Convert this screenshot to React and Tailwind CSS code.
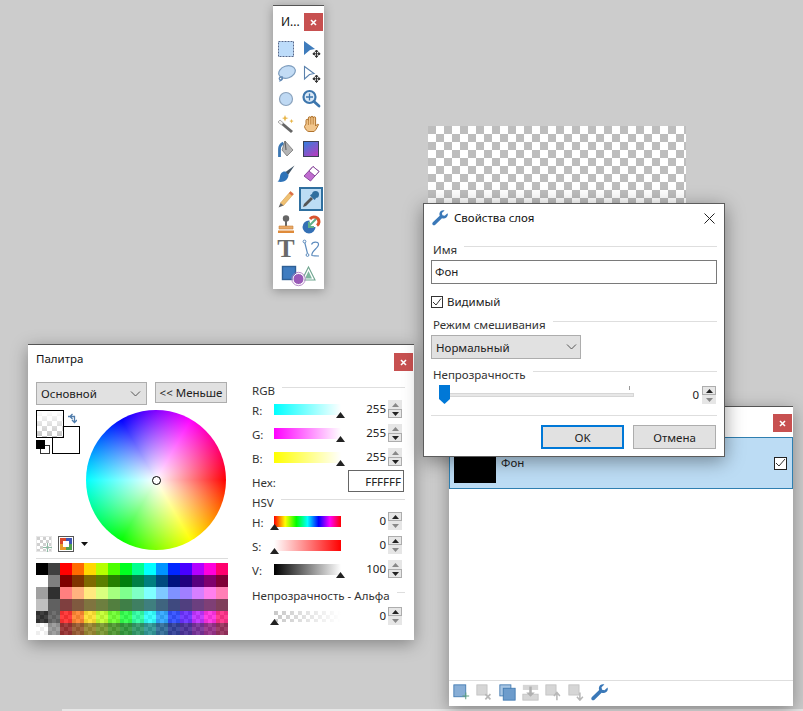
import React from 'react';

const font = { fontFamily: '"Noto Sans", "Open Sans", sans-serif' };

const CHECK = 'bg-[conic-gradient(#fff_25%,#bdbdbd_0_50%,#fff_0_75%,#bdbdbd_0)]';

const row1 = ['#000000', '#404040', '#ff0000', '#ff6a00', '#ffd800', '#b6ff00', '#4cff00', '#00ff21', '#00ff90', '#00ffff', '#0094ff', '#0026ff', '#4800ff', '#b200ff', '#ff00dc', '#ff006e'];
const row2 = ['#ffffff', '#808080', '#7f0000', '#7f3300', '#7f6a00', '#5b7f00', '#267f00', '#007f0e', '#007f46', '#007f7f', '#004a7f', '#00137f', '#21007f', '#57007f', '#7f006e', '#7f0037'];
const row3 = ['#a0a0a0', '#303030', '#ff7f7f', '#ffb27f', '#ffe97f', '#daff7f', '#a5ff7f', '#7fff8e', '#7fffc5', '#7fffff', '#7fc9ff', '#7f92ff', '#a17fff', '#d67fff', '#ff7fed', '#ff7fb6'];
const row4 = ['#c0c0c0', '#606060', '#7f3f3f', '#7f593f', '#7f743f', '#6d7f3f', '#527f3f', '#3f7f47', '#3f7f62', '#3f7f7f', '#3f647f', '#3f497f', '#503f7f', '#6b3f7f', '#7f3f76', '#7f3f5b'];

const CloseBtn = ({ className }) => (
  <div className={`absolute flex items-center justify-center w-[19px] h-[18px] bg-[#c75050] ${className}`}>
    <svg width="7" height="7" viewBox="0 0 7 7"><path d="M1 1l5 5M6 1l-5 5" stroke="#fff" strokeWidth="1.6" /></svg>
  </div>
);

const Section = ({ label, pad = 'pl-[2px]' }) => (
  <div className={`flex items-center h-[16px] gap-[7px] ${pad}`}>
    <span className="text-[11.5px] leading-none pt-[3px] text-[#333] whitespace-nowrap">{label}</span>
    <div className="flex-1 h-px -mt-[3px] bg-[#dedede]" />
  </div>
);

const Chevron = () => (
  <svg width="11" height="6" viewBox="0 0 11 6"><path d="M1 .5l4.5 4.5L10 .5" fill="none" stroke="#555" strokeWidth="1" /></svg>
);

const Spinner = ({ up = true, className = '' }) => (
  <div className={`w-[14px] h-[18px] flex flex-col bg-[#e6e6e6] ${className}`}>
    <div className={`h-[9px] flex items-center justify-center ${up ? 'border border-[#adadad]' : ''}`}>
      <svg width="7" height="4" viewBox="0 0 7 4"><path d="M3.5 0L7 4H0z" fill={up ? '#222' : '#888'} /></svg>
    </div>
    <div className={`h-[9px] flex items-center justify-center ${up ? '' : 'border border-[#adadad]'}`}>
      <svg width="7" height="4" viewBox="0 0 7 4"><path d="M0 0h7L3.5 4z" fill={up ? '#888' : '#222'} /></svg>
    </div>
  </div>
);

const Marker = ({ className }) => (
  <svg className={`absolute -bottom-[3px] ${className}`} width="9" height="6" viewBox="0 0 9 6"><path d="M4.5 0L9 6H0z" fill="#222" /></svg>
);

const SliderRow = ({ label, bar, value, end, up, className = '' }) => (
  <div className={`flex items-center h-[24px] ${className}`}>
    <span className="w-[22px] text-[11.5px] leading-none pt-[4px] text-[#333]">{label}</span>
    <div className={`relative w-[67px] h-[11px] ${bar}`}>
      <Marker className={end ? '-right-[4px]' : '-left-[4px]'} />
    </div>
    <span className="flex-1 text-right text-[11.5px] leading-none pr-[2px] text-[#222]">{value}</span>
    <Spinner up={up} className="mr-[3px]" />
  </div>
);

// toolbox icons
const Ico = ({ children, size = 20 }) => (
  <svg width={size} height={size} viewBox="0 0 20 20">{children}</svg>
);

const MoveCross = () => (
  <path d="M15.5 11.5v6.5M12.2 14.8h6.6M15.5 11l-1.3 1.6h2.6zM15.5 18.6l-1.3-1.6h2.6zM11.8 14.8l1.6-1.3v2.6zM19.2 14.8l-1.6-1.3v2.6z" stroke="#333" strokeWidth="1" fill="#333" />
);

const tools = [
  <Ico><rect x="2.5" y="2.5" width="15" height="15" fill="#bddcfa" stroke="#56688c" strokeDasharray="2 1" /></Ico>,
  <Ico><path d="M3 2l11 8-5 1-6 5z" fill="#3f7cbc" /><MoveCross /></Ico>,
  <Ico><ellipse cx="11" cy="8" rx="8.5" ry="6" transform="rotate(-18 11 8)" fill="#c3dcf5" stroke="#7d9cbd" strokeWidth="1.2" /><path d="M7 13c-3-.5-4.500 1-3.500 2.500s3 .5 3-1-1.500 2-3 3" fill="none" stroke="#5f87b3" strokeWidth="1.2" /></Ico>,
  <Ico><path d="M3.500 2.500l9.500 7-4.500 1-5 4.500z" fill="#fff" stroke="#5b82ad" strokeWidth="1.1" /><MoveCross /></Ico>,
  <Ico><circle cx="10" cy="10" r="6.500" fill="#bfd9f3" stroke="#8ba3bd" strokeWidth="1.200" /></Ico>,
  <Ico><circle cx="8.500" cy="8" r="6" fill="#dceaf7" stroke="#3d76ad" strokeWidth="2.200" /><path d="M8.500 4.500v7M5 8h7" stroke="#3d76ad" strokeWidth="1.300" /><path d="M13 12.500l5 4.500" stroke="#3d76ad" strokeWidth="2.800" strokeLinecap="round" /></Ico>,
  <Ico><path d="M2 8l2-2 13 11-2 2z" fill="#666" /><path d="M2 8l2-2 3.500 3-2 2z" fill="#f3f3f3" stroke="#888" strokeWidth=".5" /><path d="M9 1l1 2.500L12.500 4 10 5 9 7.500 8 5 6 4l2-.5z" fill="#e8b64a" /><path d="M15.500 5l.7 1.500 1.500.6-1.500.7-.7 1.500-.7-1.500-1.500-.7 1.500-.6z" fill="#e8b64a" /></Ico>,
  <Ico><path d="M5 10V6.500a1.200 1.200 0 0 1 2.400 0V4a1.200 1.200 0 0 1 2.400 0v-.5a1.200 1.200 0 0 1 2.400 0V4a1.200 1.200 0 0 1 2.400 0v8c1-1.500 2-2 3-1.500-1 1.500-2 5-4.500 7H8c-2 0-4-2.500-4.500-5z" fill="#f2c68c" stroke="#b0732d" strokeWidth="1" /><path d="M7.400 6.500V11M9.800 4v6.500M12.200 3.500v7" stroke="#b0732d" strokeWidth=".8" /></Ico>,
  <Ico><path d="M3.500 18V10c0-3 2-5 4-6" fill="none" stroke="#3b77b3" strokeWidth="2.800" /><path d="M9 2l8 9-6 6-5-6z" fill="#b4b4b4" stroke="#777" strokeWidth=".8" /><path d="M9 2l1 9" stroke="#666" strokeWidth="1.200" /></Ico>,
  <Ico><defs><linearGradient id="grd" x1="0" y1="0" x2="0.7" y2="1"><stop offset="0" stopColor="#2f80e0" /><stop offset="1" stopColor="#b040c0" /></linearGradient></defs><rect x="2.500" y="2.500" width="15" height="15" fill="url(#grd)" stroke="#3a3f55" /></Ico>,
  <Ico><path d="M18.500 1.500L9.500 8l2.500 3z" fill="#3f5366" /><path d="M9.500 7.500c-3.500-.5-5 2-5.500 5S3 16.500 1.500 17.500c5 1.500 10.500-.5 11-6.500z" fill="#2f73b8" /></Ico>,
  <Ico><path d="M12 2.500l6 5-8.500 9.500-6.500-5z" fill="#c06cd0" stroke="#8a4a9c" /><path d="M12 2.500l6 5-4 4.500-6-5z" fill="#fff" stroke="#8a4a9c" /></Ico>,
  <Ico><path d="M14.500 2.500l3 2.500-10 11.500-3-2.500z" fill="#efc072" stroke="#d59c4a" strokeWidth=".6" /><path d="M14.500 2.500l3 2.500-1.500 1.700-3-2.500z" fill="#dc6a4a" /><path d="M4.500 14l3 2.500-5 2z" fill="#666" /></Ico>,
  <Ico><circle cx="14.500" cy="5.500" r="3.500" fill="#2f6f9f" /><path d="M10.500 5l4.500 4.500-1.500 1.500-4.500-4.500z" fill="#2f6f9f" /><path d="M10 8l2 2-7 7-3 1 1-3z" fill="#555" /></Ico>,
  <Ico><circle cx="10" cy="4.500" r="3.200" fill="#666" /><path d="M9 7h2v5H9z" fill="#666" /><path d="M3 12h14v3H3z" fill="#e8a866" stroke="#c98238" strokeWidth=".6" /><path d="M2 16.500h16v2.500H2z" fill="#df8b3a" /></Ico>,
  <Ico><path d="M1.500 13a6.500 6.500 0 0 1 7-6.500v6.500h6a6.500 6.500 0 0 1-13 0z" fill="#3470b5" /><path d="M9 5a5 5 0 0 1 9 3 5 5 0 0 1-2 3.500" fill="none" stroke="#d9532c" strokeWidth="3" /><path d="M15 5l-7 7" stroke="#5fb08a" strokeWidth="2" /><path d="M8 8v5h5" fill="none" stroke="#5fb08a" strokeWidth="2" /></Ico>,
  <span className="text-[26px] leading-none font-bold text-[#6a6a6a]" style={{ fontFamily: '"Liberation Serif", serif' }}>T</span>,
  <Ico><path d="M3.500 2.500l3 12M3.500 2.500" stroke="#5c8bbd" fill="none" strokeWidth="1.200" /><circle cx="3.500" cy="2.500" r="1.400" fill="#fff" stroke="#5c8bbd" /><circle cx="6.500" cy="16" r="1.400" fill="#fff" stroke="#5c8bbd" /><path d="M10.500 5.500c1-3 7-3.500 7 0s-8 7-6.500 11c2 .5 5 .5 7 .5" fill="none" stroke="#5c8bbd" strokeWidth="1.200" /></Ico>,
];

const Shapes = () => (
  <svg width="36" height="26" viewBox="0 0 36 26">
    <path d="M27.500 5l6.500 13H21z" fill="#fff" stroke="#6fa58f" strokeWidth="1.100" />
    <path d="M27.500 9l3.500 7.500h-7z" fill="#7fb89f" />
    <rect x="1.500" y="4.500" width="13" height="13" fill="#3f7cc0" stroke="#2e5f95" strokeWidth="1.400" />
    <circle cx="17.500" cy="17" r="5.500" fill="#9a5ab8" stroke="#fff" strokeWidth="1" />
    <circle cx="17.500" cy="17" r="6.700" fill="none" stroke="#a774bd" strokeWidth=".8" />
  </svg>
);

const Wrench = ({ size = 16 }) => (
  <svg width={size} height={size} viewBox="0 0 16 16">
    <path d="M15.500 3.200l-2.800 2.600-2.300-.5-.5-2.300L12.600.5C10.400-.3 8 1 7.500 3.200c-.2.900-.1 1.700.2 2.500L.9 12.300c-.8.800-.8 1.800-.2 2.500s1.800.7 2.600 0l6.700-6.600c2.700 1 5.400-.6 5.800-3.100.1-.7 0-1.300-.3-1.900z" fill="#3a78b8" />
  </svg>
);

const GreyBox = () => <rect x="1" y="1" width="12" height="12" fill="#d6d6d6" stroke="#c2c2c2" />;

const layerIcons = [
  <Ico size={17}><rect x="1" y="1" width="14" height="14" fill="#88aed6" stroke="#3f78b0" /><path d="M15 10v8M11 14h8" stroke="#5fa080" strokeWidth="1.200" /></Ico>,
  <Ico size={17}><GreyBox /><path d="M11 12l6 6M17 12l-6 6" stroke="#b8b8b8" strokeWidth="2" /></Ico>,
  <Ico size={17}><rect x="1" y="1" width="13" height="13" fill="#a8c6e4" stroke="#3f78b0" /><rect x="5" y="5" width="14" height="14" fill="#6d9ccc" stroke="#3f78b0" /></Ico>,
  <Ico size={17}><rect x="1" y="1" width="18" height="6" fill="#d6d6d6" /><rect x="1" y="12" width="18" height="7" fill="#d6d6d6" stroke="#c2c2c2" /><path d="M10 3v10" stroke="#b0b0b0" strokeWidth="3" /><path d="M5 10l5 5 5-5" fill="#b0b0b0" /></Ico>,
  <Ico size={17}><GreyBox /><path d="M14 19v-8M10.500 14l3.500-4 3.500 4" fill="none" stroke="#b8b8b8" strokeWidth="1.800" /></Ico>,
  <Ico size={17}><GreyBox /><path d="M14 10v8M10.500 15l3.500 4 3.500-4" fill="none" stroke="#b8b8b8" strokeWidth="1.800" /></Ico>,
  <Wrench size={17} />,
];

const Toolbox = () => (
  <div className="absolute left-[273px] top-[5px] w-[51px] h-[284px] bg-white border-t border-[#555] shadow-[0_2px_10px_rgba(0,0,0,0.3)] flex flex-col items-center">
    <span className="absolute left-[8px] top-[8px] text-[12px] leading-[16px] text-[#111]">И...</span>
    <CloseBtn className="right-px top-[7px]" />
    <div className="mt-[31px] grid grid-cols-2 gap-x-px auto-rows-[25px] w-[49px]">
      {tools.map((t, i) => (
        <div
          key={i}
          className={`flex items-center justify-center h-[24px] ${i === 13 ? 'bg-[#bcdcf4] border-2 border-[#2f6f9f]' : ''}`}
        >
          {t}
        </div>
      ))}
    </div>
    <Shapes />
  </div>
);

const LayerDialog = () => (
  <div className="absolute left-[423px] top-[203px] w-[302px] h-[254px] bg-white border border-[#5c5c5c] shadow-[0_4px_18px_rgba(0,0,0,0.4)] px-[7px] flex flex-col z-20 text-[#222]">
    <div className="h-[28px] flex items-center gap-[6px] pl-px">
      <Wrench />
      <span className="text-[11.5px] leading-none text-[#111]">Свойства слоя</span>
      <svg className="ml-auto mr-[2px]" width="11" height="11" viewBox="0 0 11 11"><path d="M.5.5l10 10M10.500.5l-10 10" stroke="#222" strokeWidth="1" /></svg>
    </div>
    <div className="mt-[8px]"><Section label="Имя" /></div>
    <div className="mt-[4px] h-[24px] border border-[#7a7a7a] flex items-center px-[3px] text-[11.5px] leading-none">Фон</div>
    <div className="mt-[10px] h-[16px] flex items-center gap-[4px]">
      <div className="w-[12px] h-[12px] border border-[#333] flex items-center justify-center">
        <svg width="10" height="10" viewBox="0 0 10 10"><path d="M1 5l3 3 5-6.500" fill="none" stroke="#333" strokeWidth="1" /></svg>
      </div>
      <span className="text-[11.5px] leading-none">Видимый</span>
    </div>
    <div className="mt-[5px]"><Section label="Режим смешивания" /></div>
    <div className="mt-[4px] w-[150px] h-[24px] bg-[#e1e1e1] border border-[#adadad] flex items-center justify-between pl-[4px] pr-[3px] text-[11.5px] leading-none">
      <span className="pt-[2px]">Нормальный</span>
      <Chevron />
    </div>
    <div className="mt-[6px]"><Section label="Непрозрачность" /></div>
    <div className="mt-[4px] h-[20px] flex items-center">
      <div className="relative ml-[8px] w-[195px] h-[20px]">
        <div className="absolute left-[8px] right-0 top-[8px] h-[4px] bg-[#e7e7e7] border border-[#d6d6d6]" />
        <div className="absolute right-[4px] top-[1px] w-px h-[4px] bg-[#9a9a9a]" />
        <svg className="absolute left-0 top-0" width="11" height="19" viewBox="0 0 11 19"><path d="M0 0h11v14l-5.500 5L0 14z" fill="#0078d7" /></svg>
      </div>
      <span className="flex-1 text-right text-[11.5px] leading-none pr-[3px]">0</span>
      <Spinner className="mr-px" />
    </div>
    <div className="mt-[10px] h-px bg-[#dedede]" />
    <div className="mt-[9px] flex justify-end gap-[9px] pr-px">
      <div className="w-[83px] h-[24px] bg-[#e1e1e1] border-2 border-[#0078d7] flex items-center justify-center pt-[2px] text-[11.5px] leading-none">OK</div>
      <div className="w-[83px] h-[24px] bg-[#e1e1e1] border border-[#adadad] flex items-center justify-center pt-[2px] text-[11.5px] leading-none">Отмена</div>
    </div>
  </div>
);

const Swatch = ({ colors, faded }) =>
  colors.map((c, i) => (
    <div key={c + i} className={`h-[12px] ${faded ? `${CHECK} bg-[length:8px_8px]` : ''}`}>
      <div className={`h-full ${faded ? 'opacity-75' : ''}`} style={{ backgroundColor: c }} />
    </div>
  ));

const Palette = () => (
  <div className="absolute left-[28px] top-[344px] w-[386px] h-[296px] bg-white border-t border-[#555] shadow-[0_4px_16px_rgba(0,0,0,0.35)] text-[#222]">
    <div className="h-[28px] flex items-center pl-[8px] text-[11.5px] leading-none text-[#111]">Палитра</div>
    <CloseBtn className="right-[1px] top-[8px]" />
    <div className="flex pl-[8px] mt-[9px]">
      <div className="w-[192px]">
        <div className="flex items-start">
          <div className="w-[111px] h-[23px] bg-[#e1e1e1] border border-[#adadad] flex items-center justify-between pl-[4px] pr-[5px] text-[11.5px] leading-none">
            <span>Основной</span>
            <Chevron />
          </div>
          <div className="ml-[8px] w-[72px] h-[21px] bg-[#e1e1e1] border border-[#adadad] flex items-center justify-center text-[11.5px] leading-none whitespace-nowrap">{'<< Меньше'}</div>
        </div>
        <div className="flex mt-[5px] h-[142px]">
          <div className="w-[50px] flex flex-col justify-between">
            <div className="relative h-[44px]">
              <div className="absolute left-[16px] top-[16px] w-[28px] h-[28px] bg-white border border-black" />
              <div className="absolute left-0 top-0 w-[28px] h-[28px] border border-black bg-[linear-gradient(#fff,#fff0),conic-gradient(#fff_25%,#c4c4c4_0_50%,#fff_0_75%,#c4c4c4_0)] bg-[length:100%_100%,10px_10px]" />
              <svg className="absolute left-[31px] top-[3px]" width="10" height="11" viewBox="0 0 10 11"><path d="M1 3.500h6.500v5.500M5.500 1L3 3.500 5.500 6M5 7l2.500 2.500L10 7" fill="none" stroke="#4f7cab" strokeWidth="1.300" /></svg>
              <div className="absolute left-[4px] top-[35px] w-[10px] h-[9px] bg-white border border-[#333]" />
              <div className="absolute left-0 top-[30px] w-[9px] h-[9px] bg-black" />
            </div>
            <div className="flex items-center gap-[6px] w-[60px]">
              <div className={`relative shrink-0 w-[16px] h-[16px] border border-[#ddd] ${CHECK} bg-[length:6px_6px] opacity-70`}>
                <svg className="absolute -right-px -bottom-px" width="9" height="9" viewBox="0 0 9 9"><path d="M4.500 0v9M0 4.500h9" stroke="#5f9f80" strokeWidth="1" /></svg>
              </div>
              <div className="relative shrink-0 w-[16px] h-[16px] border border-[#555] p-px grid grid-cols-2">
                <div className="bg-[#d9472b]" /><div className="bg-[#3f55b5]" />
                <div className="bg-[#e79a28]" /><div className="bg-[#4fa04f]" />
                <div className="absolute left-[4px] top-[4px] w-[6px] h-[6px] bg-white" />
              </div>
              <svg className="shrink-0 ml-px" width="7" height="4" viewBox="0 0 7 4"><path d="M0 0h7L3.500 4z" fill="#111" /></svg>
            </div>
          </div>
          <div className="relative w-[140px] h-[140px] rounded-full bg-[radial-gradient(circle_closest-side,#fff,#fff0_100%),conic-gradient(from_90deg,#f00,#ff0,#0f0,#0ff,#00f,#f0f,#f00)]">
            <div className="absolute left-[66px] top-[66px] w-[9px] h-[9px] rounded-full bg-white border border-black" />
          </div>
        </div>
        <div className="mt-[6px] h-px bg-[#dcdcdc]" />
        <div className="mt-[4px] grid grid-cols-[repeat(16,12px)]">
          <Swatch colors={row1} />
          <Swatch colors={row2} />
          <Swatch colors={row3} />
          <Swatch colors={row4} />
          <Swatch colors={row1} faded />
          <Swatch colors={row2} faded />
        </div>
      </div>
      <div className="ml-[24px] w-[153px] text-[11.5px]">
        <div className="-mt-[1px]"><Section label="RGB" pad="pl-0" /></div>
        <SliderRow label="R:" bar="bg-[linear-gradient(to_right,#0ff,#fff)]" value="255" end up={false} />
        <SliderRow label="G:" bar="bg-[linear-gradient(to_right,#f0f,#fff)]" value="255" end up={false} />
        <SliderRow label="B:" bar="bg-[linear-gradient(to_right,#ff0,#fff)]" value="255" end up={false} />
        <div className="mt-[1px] h-[22px] flex items-center justify-between">
          <span className="leading-none pt-[3px] text-[#333]">Hex:</span>
          <div className="w-[56px] h-[22px] mr-px border border-[#666] flex items-center justify-end pr-[2px] pt-[2px] leading-none">FFFFFF</div>
        </div>
        <div className="mt-[1px]"><Section label="HSV" pad="pl-0" /></div>
        <SliderRow label="H:" bar="bg-[linear-gradient(to_right,#f00,#ff0,#0f0,#0ff,#00f,#f0f,#f00)]" value="0" up />
        <SliderRow label="S:" bar="bg-[linear-gradient(to_right,#fff,#f00)]" value="0" up />
        <SliderRow label="V:" bar="bg-[linear-gradient(to_right,#000,#fff)]" value="100" end up={false} />
        <div className="mt-[5px]"><Section label="Непрозрачность - Альфа" pad="pl-0" /></div>
        <SliderRow
          label=""
          className="mt-[2px]"
          bar="bg-[linear-gradient(to_right,#fff0,#fff),conic-gradient(#fff_25%,#c8c8c8_0_50%,#fff_0_75%,#c8c8c8_0)] bg-[length:100%_100%,8px_8px]"
          value="0"
          up
        />
      </div>
    </div>
  </div>
);

const Layers = () => (
  <div className="absolute left-[449px] top-[406px] w-[344px] h-[300px] bg-white border-t border-[#555] shadow-[0_4px_16px_rgba(0,0,0,0.35)] flex flex-col z-10 text-[#222]">
    <CloseBtn className="right-[1px] top-[7px]" />
    <div className="mt-[30px] h-[52px] bg-[#bcdcf4] border border-[#2f7fb0] flex items-center pl-[4px] pr-[4px]">
      <div className="w-[42px] h-[40px] bg-black" />
      <span className="ml-[5px] text-[11.5px] leading-none">Фон</span>
      <div className="ml-auto mr-[1px] w-[13px] h-[13px] bg-white border border-[#222] flex items-center justify-center">
        <svg width="11" height="10" viewBox="0 0 11 10"><path d="M1 5l3 3 6-7" fill="none" stroke="#333" strokeWidth="1" /></svg>
      </div>
    </div>
    <div className="mt-auto h-px bg-[#dedede]" />
    <div className="h-[25px] flex items-start pt-[3px] gap-[6px] pl-[4px]">
      {layerIcons.map((ic, i) => <div key={i} className="w-[17px] h-[17px]">{ic}</div>)}
    </div>
  </div>
);

const App = () => (
  <div className="relative w-[803px] h-[711px] overflow-hidden bg-[#cccccc]" style={font}>
    <div className={`absolute left-[428px] top-[126px] w-[258px] h-[90px] ${CHECK} bg-[length:16px_16px]`} />
    <div className="absolute left-[62px] right-0 top-[709px] h-[2px] bg-[#e6e6e6]" />
    <Toolbox />
    <Palette />
    <Layers />
    <LayerDialog />
  </div>
);

export default App;
